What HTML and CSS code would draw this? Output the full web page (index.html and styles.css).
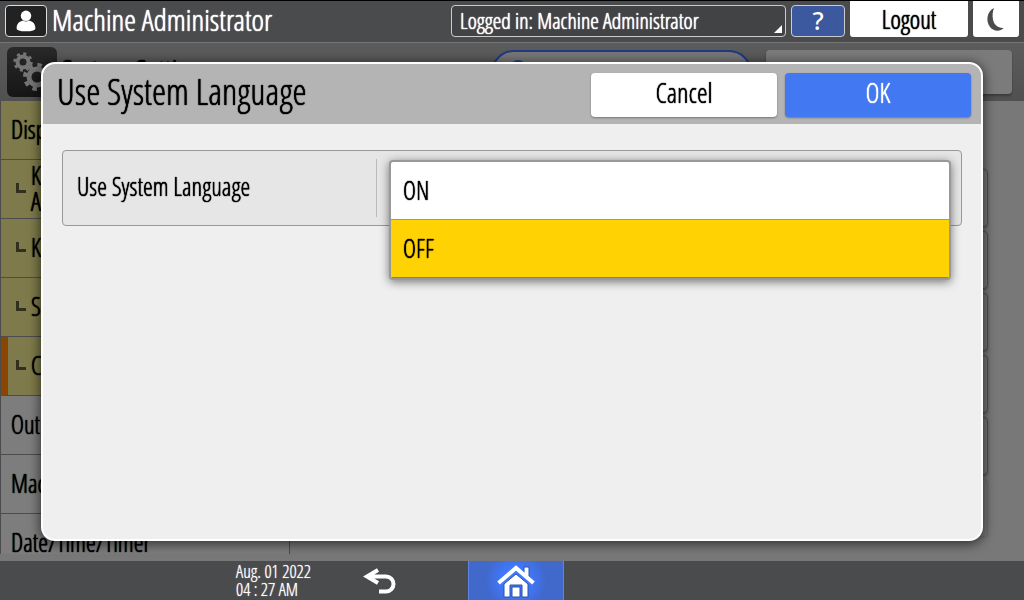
FILE: index.html
```
<!DOCTYPE html>
<html lang="en">
<head>
<meta charset="utf-8">
<title>System Settings</title>
<link rel="stylesheet" href="styles.css">
</head>
<body>
<header class="topbar">
  <span class="user-icon">
    <svg viewBox="0 0 42 32" width="42" height="32" aria-hidden="true"><circle cx="21" cy="10.5" r="5.6"/><path d="M11 24c0-5 2.500-7.500 7-8.500q3 1.800 6 0c4.500 1 7 3.500 7 8.500q0 3-10 3t-10-3z"/></svg>
  </span>
  <h1 class="user-name">Machine Administrator</h1>
  <button class="login-status" type="button">Logged in: Machine Administrator</button>
  <button class="help" type="button">?</button>
  <button class="logout" type="button">Logout</button>
  <button class="sleep" type="button" aria-label="Sleep">
    <svg viewBox="0 0 46 36" width="46" height="36" aria-hidden="true"><path d="M21 7C14 10 12.500 20 17 26c4 5 10.500 4.500 13.500 1-6 .2-9.500-3.500-10.500-8.500-.8-4-.3-8 1-11.500z"/></svg>
  </button>
</header>

<main class="page">
  <div class="page-head">
    <span class="gear-tile">
      <svg viewBox="0 0 50 50" width="50" height="50" aria-hidden="true">
        <g fill="none" stroke="#757575">
          <circle cx="16" cy="15" r="5.500" stroke-width="4"/>
          <circle cx="16" cy="15" r="8.200" stroke-width="3" stroke-dasharray="3 3.440"/>
          <circle cx="30" cy="30" r="8" stroke-width="5"/>
          <circle cx="30" cy="30" r="12" stroke-width="4" stroke-dasharray="4.500 4.925"/>
        </g>
      </svg>
    </span>
    <h2 class="page-title">System Settings</h2>
    <div class="search"><svg viewBox="0 0 24 24" width="24" height="24" aria-hidden="true"><circle cx="10" cy="10" r="7"/><path d="M15 15l7 7"/></svg></div>
    <button class="check" type="button">Check Status</button>
  </div>
  <div class="page-body">
    <nav class="menu">
      <a class="item sub-open" href="#">Display/Input</a>
      <a class="item sub" href="#"><i class="elbow"></i><span>Key/Keyboard<br>Assignment</span></a>
      <a class="item sub" href="#"><i class="elbow"></i><span>Key Repeat</span></a>
      <a class="item sub" href="#"><i class="elbow"></i><span>Screen</span></a>
      <a class="item sub current" href="#"><i class="elbow"></i><span>Custom</span></a>
      <a class="item" href="#">Output</a>
      <a class="item" href="#">Machine</a>
      <a class="item" href="#">Date/Time/Timer</a>
    </nav>
    <div class="rows">
      <div class="row"></div><div class="row"></div><div class="row"></div><div class="row"></div><div class="row"></div><div class="row faded"></div>
    </div>
  </div>
</main>

<footer class="bottombar">
  <time class="clock" datetime="2022-08-01T04:27">Aug. 01 2022<br>04 : 27 AM</time>
  <button class="back" type="button" aria-label="Back">
    <svg viewBox="0 0 34 28" width="34" height="28" aria-hidden="true"><path d="M4 9.500h19a7.500 7.500 0 0 1 0 15h-7M15 3L4 9.500l11 6.500"/></svg>
  </button>
  <button class="home" type="button" aria-label="Home">
    <svg viewBox="0 0 40 34" width="40" height="34" aria-hidden="true"><path d="M28 3h5v12l-5-5zM20 10l12 10v13h-6V21H14v12H8V20z M16 23h8v10h-8z"/><path class="roof" d="M2.500 19L20 4l17.500 15"/></svg>
  </button>
</footer>

<section class="dialog" role="dialog" aria-modal="true" aria-labelledby="dialog-title">
  <header class="dialog-head">
    <h2 class="dialog-title" id="dialog-title">Use System Language</h2>
    <button class="action" type="button">Cancel</button>
    <button class="action primary" type="button">OK</button>
  </header>
  <div class="dialog-body">
    <div class="setting">
      <label class="setting-label" for="language">Use System Language</label>
      <div class="setting-value">
        <select class="choices" id="language" size="2">
          <option>ON</option>
          <option selected>OFF</option>
        </select>
      </div>
    </div>
  </div>
</section>
</body>
</html>
```
FILE: styles.css
```
* { box-sizing: border-box; }

body {
  margin: 0;
  height: 100vh;
  display: flex;
  flex-direction: column;
  overflow: hidden;
  background: #787878;
  color: #000;
  font: 300 25px/26px "Open Sans Condensed Light", "Roboto Condensed", "Liberation Sans Narrow", "Noto Sans", sans-serif;
  text-shadow: 0 0 1px currentColor, 0 0 1px currentColor;
}

h1, h2 { margin: 0; font-weight: inherit; }
button, select { font: inherit; color: inherit; text-shadow: 0 0 1px currentColor, 0 0 1px currentColor; padding: 0; border: 0; }
a { color: inherit; text-decoration: none; }
svg { display: block; }

.topbar {
  display: flex;
  align-items: flex-end;
  gap: 5px;
  height: 43px;
  padding: 0 5px 5px;
  border-top: 1px solid #000;
  border-bottom: 1px solid #747474;
  background: #4a4b4c;
  color: #fff;
  text-shadow: 0 0 1px currentColor, 0 0 1px currentColor;
}
.user-icon {
  border: 1px solid #ddd;
  border-radius: 4px;
  background: #222;
  fill: #fff;
}
.user-icon svg { height: 30px; width: 40px; }
.user-name { flex: 1; font-size: 30px; line-height: 34px; }
.login-status {
  position: relative;
  width: 335px;
  height: 32px;
  padding: 0 8px 2px;
  border: 1px solid #ccc;
  border-radius: 4px;
  background: #424344;
  font-size: 22px;
  text-align: left;
}
.login-status::after {
  content: "";
  position: absolute;
  right: 3px;
  bottom: 3px;
  border: 4px solid transparent;
  border-right-color: #fff;
  border-bottom-color: #fff;
}
.help {
  width: 54px;
  height: 32px;
  padding-bottom: 2px;
  border: 1px solid #ccc;
  border-radius: 4px;
  background: #3c589e;
  font-family: "Noto Sans", sans-serif;
  font-weight: 500;
  text-shadow: none;
}
.logout, .sleep { height: 36px; border-radius: 0 0 3px 3px; background: #fff; color: #000; }
.logout { width: 118px; }
.sleep { width: 46px; fill: #4a4b4c; }

.page { flex: 1; min-height: 0; display: flex; flex-direction: column; }
.page-head {
  display: flex;
  align-items: flex-start;
  height: 58px;
  padding: 4px 12px 0 7px;
  background: linear-gradient(#5c5c5c, #505050);
}
.gear-tile { border-radius: 6px; background: linear-gradient(#292929, #161616); }
.page-title { flex: 1; padding: 7px 4px; font-size: 30px; line-height: 32px; }
.search {
  width: 261px;
  height: 46px;
  margin: 3px 14px 0 0;
  padding: 7px 15px;
  border: 2px solid #1f3a80;
  border-radius: 24px;
  background: #777;
}
.search svg { fill: none; stroke: #1f3a80; stroke-width: 4; }
.check {
  width: 246px;
  height: 44px;
  margin-top: 3px;
  padding-top: 2px;
  border-radius: 4px;
  background: #7b7b7b;
  box-shadow: 0 2px 2px #3c3c3c;
}

.page-body { flex: 1; min-height: 0; display: flex; }
.menu { width: 290px; height: 453px; overflow: hidden; border: solid #4c4c4f; border-width: 0 1px; background: #7d7d7d; }
.item {
  display: flex;
  align-items: center;
  height: 59px;
  padding: 0 10px 2px;
  border-bottom: 1px solid #4c4c4f;
}
.sub, .sub-open { background: #7e7a4b; }
.sub { gap: 5px; padding-left: 15px; }
.current { padding-left: 8px; border-left: 7px solid #8a4500; }
.elbow { width: 10px; height: 10px; border: solid #332f1f; border-width: 0 0 3px 3px; }
.rows { flex: 1; padding: 68px 36px 0 20px; display: flex; flex-direction: column; gap: 4px; }
.row { flex: none; height: 58px; border: 1px solid #505050; border-radius: 4px; box-shadow: 0 1px 2px #555; }
.faded { opacity: .25; }

.bottombar {
  display: flex;
  height: 39px;
  background: #4a4b4c;
  color: #fff;
  text-shadow: 0 0 1px currentColor;
}
.clock { width: 349px; padding: 1px 0 0 236px; font-size: 18px; line-height: 18px; white-space: nowrap; }
.back { width: 62px; display: grid; place-items: center; background: none; }
.back svg { fill: none; stroke: #fff; stroke-width: 4; }
.home {
  width: 96px;
  margin-left: 57px;
  display: grid;
  place-items: center;
  border: solid #5b86e8;
  border-width: 0 1px;
  background: radial-gradient(circle, #4078ff 25%, #4169cc 60%);
}
.home svg { fill: #fff; stroke: #2d51a8; }
.home .roof { fill: none; stroke: #fff; stroke-width: 4; }

.dialog {
  position: fixed;
  inset: 62px 41px 59px;
  display: flex;
  flex-direction: column;
  border: 2px solid #fff;
  border-radius: 14px;
  background: #efefef;
  box-shadow: 0 2px 12px 1px rgb(0 0 0 / 60%);
}
.dialog-head {
  display: flex;
  gap: 8px;
  height: 60px;
  padding: 9px 10px 7px 14px;
  border-radius: 12px 12px 0 0;
  background: #b4b4b4;
}
.dialog-title { flex: 1; font-size: 36px; line-height: 38px; }
.action { width: 186px; height: 44px; padding-bottom: 4px; border-radius: 4px; background: #fff; box-shadow: 0 1px 2px #777; font-size: 27px; }
.primary { background: #4278f2; color: #fff; }
.dialog-body { flex: 1; padding: 26px 19px; }
.setting {
  display: flex;
  height: 76px;
  padding: 8px 0;
  border: 1px solid #999;
  border-radius: 4px;
  background: #e6e6e6;
}
.setting-label { width: 314px; padding: 14px; border-right: 1px solid #bbb; }
.setting-value { position: relative; flex: 1; }
.choices {
  appearance: none;
  position: absolute;
  top: 1px;
  left: 12px;
  right: 10px;
  height: 120px;
  overflow: hidden;
  border: 2px solid #999;
  border-radius: 4px;
  outline: 0;
  background: #fff;
  box-shadow: 0 2px 10px rgb(0 0 0 / 50%);
}
.choices option { display: flex; align-items: center; height: 58px; padding: 0 12px 2px; border-bottom: 1px solid #999; color: #000; }
.choices option:checked { background: #ffd203 linear-gradient(#ffd203, #ffd203); border-color: #a08400; }
```
